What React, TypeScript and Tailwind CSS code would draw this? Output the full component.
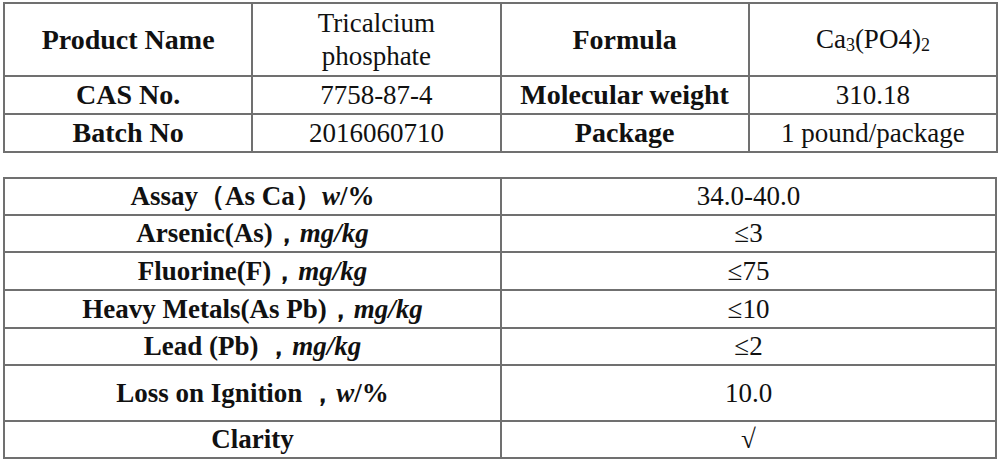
import React from "react";

const info = [
  { a: "Product Name", b: "Tricalcium phosphate", c: "Formula", d: "formula", h: "h-[73px]" },
  { a: "CAS No.", b: "7758-87-4", c: "Molecular weight", d: "310.18", h: "h-[38px]" },
  { a: "Batch No", b: "2016060710", c: "Package", d: "1 pound/package", h: "h-[38px]" },
];

const specs = [
  { label: <>Assay（As Ca）<i>w</i>/%</>, value: "34.0-40.0", h: "h-[37px]" },
  { label: <>Arsenic(As)，<i>mg/kg</i></>, value: "≤3", h: "h-[37px]" },
  { label: <>Fluorine(F)，<i>mg/kg</i></>, value: "≤75", h: "h-[38px]" },
  { label: <>Heavy Metals(As Pb)，<i>mg/kg</i></>, value: "≤10", h: "h-[38px]" },
  { label: <>Lead (Pb) ，<i>mg/kg</i></>, value: "≤2", h: "h-[37px]" },
  { label: <>Loss on Ignition ，<i>w</i>/%</>, value: "10.0", h: "h-[56px]" },
  { label: <>Clarity</>, value: "√", h: "h-[37px]" },
];

const cell = "border-2 border-[#707070] text-center align-middle p-0";

export default function App() {
  return (
    <div className="w-[1000px] h-[461px] bg-white text-[#111] font-['Liberation_Serif'] pt-[2px] pl-[3px]">
      <table className="w-[995px] table-fixed border-collapse">
        <tbody>
          {info.map((row, i) => (
            <tr key={i} className={row.h}>
              <td className={`${cell} font-bold text-[28px] leading-none`}>{row.a}</td>
              <td className={`${cell} text-[27px] leading-[33px] px-12`}>{row.b}</td>
              <td className={`${cell} font-bold text-[28px] leading-none`}>{row.c}</td>
              <td className={`${cell} text-[27px] leading-none`}>
                {row.d === "formula" ? (
                  <span>
                    Ca<span className="text-[18px] relative top-[3px]">3</span>(PO4)
                    <span className="text-[18px] relative top-[3px]">2</span>
                  </span>
                ) : (
                  row.d
                )}
              </td>
            </tr>
          ))}
        </tbody>
      </table>

      <table className="w-[994px] table-fixed border-collapse mt-[24px]">
        <tbody>
          {specs.map((row, i) => (
            <tr key={i} className={row.h}>
              <td className={`${cell} w-[497px] font-bold text-[27px] leading-none`}>{row.label}</td>
              <td className={`${cell} text-[27px] leading-none`}>{row.value}</td>
            </tr>
          ))}
        </tbody>
      </table>
    </div>
  );
}
